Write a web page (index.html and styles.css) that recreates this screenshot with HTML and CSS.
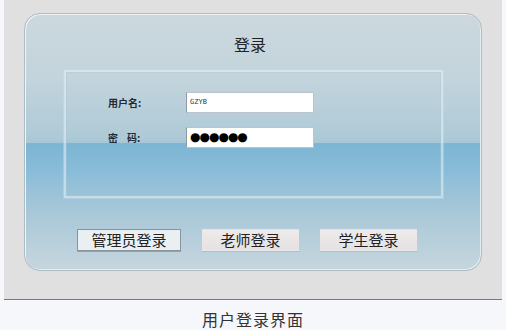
FILE: index.html
```html
<!DOCTYPE html>
<html lang="zh-CN">
<head>
  <meta charset="UTF-8">
  <title>用户登录界面</title>
  <link rel="stylesheet" href="styles.css">
</head>
<body>
  <div class="shot">
    <div class="panel">
      <h1 class="title">登录</h1>
      <form class="box">
        <div class="row">
          <label class="lbl">用户名:</label>
          <div class="field">GZYB</div>
        </div>
        <div class="row">
          <label class="lbl">密<span class="gap"></span>码:</label>
          <div class="field dots">●●●●●●</div>
        </div>
      </form>
      <div class="buttons">
        <button class="btn active" type="button">管理员登录</button>
        <button class="btn" type="button">老师登录</button>
        <button class="btn" type="button">学生登录</button>
      </div>
    </div>
  </div>
  <p class="caption">用户登录界面</p>
</body>
</html>
```

FILE: styles.css
```css
body {
  margin: 0;
  background: #f6f7fb;
  font-family: "Noto Sans CJK SC", "Liberation Sans", sans-serif;
}
.shot {
  margin-left: 4px;
  width: 498px;
  height: 300px;
  background: #e0e0e0;
  border-bottom: 1px solid #7a7a7a;
  padding-top: 13px;
  box-sizing: border-box;
}
.panel {
  margin-left: 20px;
  width: 458px;
  height: 258px;
  box-sizing: border-box;
  border: 1px solid #aebcc4;
  border-radius: 16px;
  box-shadow: inset 1px 1px 0 #eef4f7, inset -1px -1px 0 #e4edf2;
  background: linear-gradient(to bottom,
    #ccd8de 0%, #c3d4dc 25%, #aecad7 48%, #a7c7d7 50.4%,
    #7cb5d4 50.6%, #8bbdd8 62%, #a9c8d8 78%, #c6d6de 100%);
  padding-top: 19px;
}
.title {
  margin: 0;
  text-align: center;
  font-size: 16px;
  font-weight: normal;
  color: #222;
  line-height: 22px;
  padding-right: 6px;
}
.box {
  margin: 15px 0 0 39px;
  width: 379px;
  height: 128px;
  box-sizing: border-box;
  border: 2px solid rgba(226, 238, 245, 0.6);
  box-shadow: 0 0 0 1px rgba(200, 222, 234, 0.4), inset 0 0 0 1px rgba(170, 200, 216, 0.4);
  padding-top: 20px;
  display: flex;
  flex-direction: column;
  gap: 14px;
}
.row {
  display: flex;
  align-items: center;
}
.lbl {
  width: 78px;
  padding-left: 42px;
  font-size: 10px;
  font-weight: bold;
  color: #1f2a33;
  display: flex;
  align-items: center;
}
.gap {
  width: 9px;
}
.field {
  width: 128px;
  height: 21px;
  box-sizing: border-box;
  background: #fff;
  border: 1px solid #b9c4cc;
  border-left-color: #8d99a3;
  padding-left: 3px;
  font-family: "DejaVu Sans Mono", monospace;
  font-size: 7px;
  line-height: 19px;
  color: #333;
}
.field.dots {
  font-family: "DejaVu Sans", sans-serif;
  font-size: 12px;
  letter-spacing: -1px;
  color: #000;
}
.buttons {
  margin: 31px 0 0 52px;
  display: flex;
  gap: 21px;
}
.btn {
  height: 22px;
  padding: 0;
  border: 1px solid transparent;
  background: linear-gradient(to bottom, #efeaea, #e4e2e4);
  font-family: "Noto Sans CJK SC", sans-serif;
  font-size: 15px;
  line-height: 20px;
  color: #222;
  width: 97px;
  box-shadow: 0 1px 0 rgba(150, 180, 200, 0.6);
}
.btn.active {
  width: 104px;
  border: 1px solid #8a939a;
  background: #eaeff4;
  box-shadow: 0 1px 0 #7fa6c8;
}
.caption {
  margin: 7px 0 0;
  text-align: center;
  font-size: 16px;
  letter-spacing: 1px;
  color: #333;
}
```
